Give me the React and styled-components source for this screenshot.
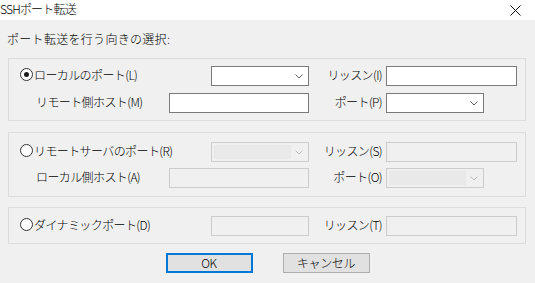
import React from "react";
import styled, { createGlobalStyle } from "styled-components";

const Global = createGlobalStyle`
  html, body { margin: 0; padding: 0; background: #f0f0f0; }
  body { font-family: "Noto Sans CJK JP", "Noto Sans", sans-serif; font-size: 12px; font-weight: 300; color: #000; }
`;

const Window = styled.div`
  width: 535px;
  height: 283px;
  display: flex;
  flex-direction: column;
  background: #f0f0f0;
  overflow: hidden;
`;

const TitleBar = styled.div`
  height: 20px;
  flex: none;
  background: #ffffff;
  display: flex;
  align-items: center;
  justify-content: space-between;
  padding: 0 14px 0 0;
`;

const Title = styled.span`
  font-size: 12px;
  line-height: 20px;
  letter-spacing: -0.8px;
  color: #000;
  margin-top: -2px;
`;

const Body = styled.div`
  flex: 1;
  display: flex;
  flex-direction: column;
  padding: 0 9px 0 8px;
`;

const Prompt = styled.div`
  margin: 12px 0 0 -1px;
  height: 14px;
  line-height: 14px;
  letter-spacing: 0.3px;
`;

const GroupBox = styled.div`
  margin-top: ${(p) => p.$mt}px;
  border: 1px solid #dcdcdc;
  display: grid;
  grid-template-columns: 149px 140px 77px 131px;
  row-gap: ${(p) => p.$gap || 7}px;
  padding: ${(p) => p.$pt}px 0 ${(p) => p.$pb}px 11px;
  align-items: start;
`;

const RadioLabel = styled.label`
  display: flex;
  align-items: flex-start;
  gap: 1px;
  line-height: 14px;
  padding-top: 2px;
  letter-spacing: -0.6px;
  white-space: nowrap;
`;

const RadioCircle = styled.span`
  width: 11px;
  height: 11px;
  border: 1px solid #333;
  border-radius: 50%;
  background: #fff;
  display: flex;
  align-items: center;
  justify-content: center;
  flex: none;
  &::after {
    content: "";
    width: 5px;
    height: 5px;
    border-radius: 50%;
    background: ${(p) => (p.$checked ? "#1a1a1a" : "transparent")};
  }
`;

const SubLabel = styled.span`
  line-height: 14px;
  padding: 2px 0 0 16px;
  letter-spacing: -0.6px;
  white-space: nowrap;
`;

const SideLabel = styled.span`
  line-height: 14px;
  padding: 2px 4px 0 0;
  text-align: right;
  letter-spacing: -0.6px;
  white-space: nowrap;
`;

const TextBox = styled.div`
  box-sizing: border-box;
  height: 20px;
  width: ${(p) => p.$w}px;
  justify-self: ${(p) => (p.$end ? "end" : "start")};
  border: 1px solid ${(p) => (p.$disabled ? "#cccccc" : "#7a7a7a")};
  background: ${(p) => (p.$disabled ? "#f0f0f0" : "#ffffff")};
`;

const Combo = styled.div`
  box-sizing: border-box;
  height: 20px;
  width: ${(p) => p.$w}px;
  justify-self: ${(p) => (p.$end ? "end" : "start")};
  border: 1px solid ${(p) => (p.$disabled ? "#cccccc" : "#7a7a7a")};
  background: ${(p) => (p.$disabled ? "#f0f0f0" : "#ffffff")};
  display: flex;
  align-items: center;
  padding: 2px 5px 2px 2px;
  gap: 4px;
`;

const ComboField = styled.div`
  flex: 1;
  align-self: stretch;
  background: ${(p) => (p.$disabled ? "#e9e9e9" : "transparent")};
`;

const ButtonRow = styled.div`
  margin-top: 9px;
  display: flex;
  justify-content: center;
  gap: 30px;
  padding-left: 1px;
`;

const Button = styled.button`
  box-sizing: border-box;
  width: 87px;
  height: 20px;
  padding: 0;
  font-family: "Noto Sans CJK JP", "Noto Sans", sans-serif;
  font-size: 12px;
  font-weight: 300;
  line-height: 16px;
  color: #000;
  background: #e1e1e1;
  border: ${(p) => (p.$default ? "2px solid #0078d7" : "1px solid #adadad")};
  letter-spacing: -0.4px;
`;

const Chevron = ({ disabled }) => (
  <svg width="8" height="5" viewBox="0 0 8 5" style={{ flex: "none" }}>
    <polyline
      points="0.5,0.5 4,4 7.5,0.5"
      fill="none"
      stroke={disabled ? "#bfbfbf" : "#606060"}
      strokeWidth="1"
    />
  </svg>
);

const CloseIcon = () => (
  <svg width="11" height="11" viewBox="0 0 11 11">
    <path d="M0.5 0.5 L10.5 10.5 M10.5 0.5 L0.5 10.5" stroke="#111" strokeWidth="1" />
  </svg>
);

const Radio = ({ checked, children }) => (
  <RadioLabel>
    <RadioCircle $checked={checked} />
    <span>{children}</span>
  </RadioLabel>
);

const ComboBox = ({ w, end, disabled }) => (
  <Combo $w={w} $end={end} $disabled={disabled}>
    <ComboField $disabled={disabled} />
    <Chevron disabled={disabled} />
  </Combo>
);

export default function App() {
  return (
    <>
      <Global />
      <Window>
        <TitleBar>
          <Title>SSHポート転送</Title>
          <CloseIcon />
        </TitleBar>
        <Body>
          <Prompt>ポート転送を行う向きの選択:</Prompt>

          <GroupBox $mt={12} $pt={7} $pb={7}>
            <Radio checked>ローカルのポート(L)</Radio>
            <ComboBox w={98} end />
            <SideLabel>リッスン(I)</SideLabel>
            <TextBox $w={131} />
            <SubLabel>リモート側ホスト(M)</SubLabel>
            <TextBox $w={140} />
            <SideLabel>ポート(P)</SideLabel>
            <ComboBox w={98} />
          </GroupBox>

          <GroupBox $mt={11} $pt={9} $pb={8} $gap={6}>
            <Radio>リモートサーバのポート(R)</Radio>
            <ComboBox w={98} end disabled />
            <SideLabel>リッスン(S)</SideLabel>
            <TextBox $w={131} $disabled />
            <SubLabel>ローカル側ホスト(A)</SubLabel>
            <TextBox $w={140} $disabled />
            <SideLabel>ポート(O)</SideLabel>
            <ComboBox w={98} disabled />
          </GroupBox>

          <GroupBox $mt={10} $pt={8} $pb={7}>
            <Radio>ダイナミックポート(D)</Radio>
            <TextBox $w={98} $end $disabled />
            <SideLabel>リッスン(T)</SideLabel>
            <TextBox $w={131} $disabled />
          </GroupBox>

          <ButtonRow>
            <Button $default>OK</Button>
            <Button>キャンセル</Button>
          </ButtonRow>
        </Body>
      </Window>
    </>
  );
}
